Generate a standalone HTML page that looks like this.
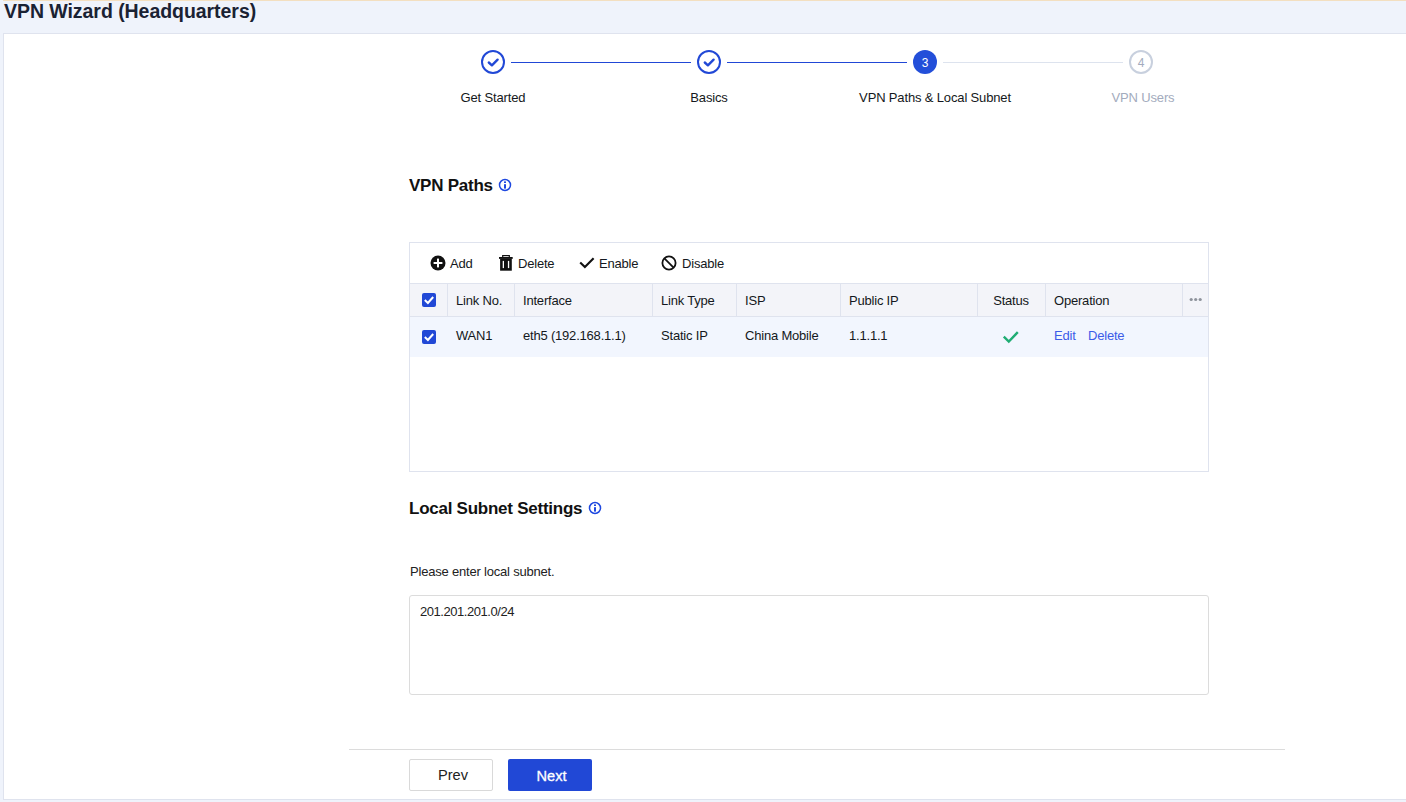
<!DOCTYPE html>
<html><head><meta charset="utf-8">
<style>
*{box-sizing:border-box;margin:0;padding:0}
html,body{width:1406px;height:802px;overflow:hidden}
body{background:#eff3fb;font-family:"Liberation Sans",sans-serif;color:#141820;position:relative}
.topline{position:absolute;left:3px;top:0;width:1403px;height:1px;background:#f3dfc0}
.title{position:absolute;left:4px;top:-1px;font-size:19.5px;letter-spacing:-0.05px;font-weight:bold;line-height:24px;color:#1a2233;white-space:nowrap}
.panel{position:absolute;left:3px;top:33px;width:1403px;height:767px;background:#fff;border:1px solid #dfe3ee;border-right:none}
.abs{position:absolute;white-space:nowrap}
.circle{position:absolute;width:24px;height:24px;border-radius:50%;top:50px}
.done{border:2px solid #2148d6}
.cur{background:#234fd9;color:#fff;font-size:12px;line-height:26px;text-align:center}
.todo{border:2px solid #c8d0de;color:#a3abbd;font-size:12px;line-height:22px;text-align:center}
.sline{position:absolute;top:62px;height:1px}
.slabel{position:absolute;top:90px;font-size:13px;line-height:16px;text-align:center;width:200px;white-space:nowrap;letter-spacing:-0.15px}
.h2{position:absolute;left:409px;font-size:17px;font-weight:bold;color:#111;white-space:nowrap;line-height:20px;letter-spacing:-0.25px}
.info{display:inline-block;width:12px;height:12px;vertical-align:middle}
.tbox{position:absolute;left:409px;top:242px;width:800px;height:230px;border:1px solid #dfe3ee;background:#fff}
.t13{font-size:13px;line-height:16px;letter-spacing:-0.2px}
.hrow{position:absolute;left:0;top:40px;width:798px;height:34px;background:#f3f4f9;border-top:1px solid #dfe3ee;border-bottom:1px solid #dfe3ee}
.drow{position:absolute;left:0;top:74px;width:798px;height:40px;background:#f2f6fe}
.vdiv{position:absolute;top:0;width:1px;height:32px;background:#dfe3ee}
.cb{position:absolute;width:14px;height:14px;background:#2148d6;border-radius:2px}
.btn{position:absolute;top:759px;height:32px;font-size:14.6px;line-height:31px;text-align:center;border-radius:2px}
</style></head><body>
<div class="topline"></div>
<div class="title">VPN Wizard (Headquarters)</div>
<div class="panel"></div>

<!-- stepper -->
<div class="circle done" style="left:481px"><svg width="20" height="20" style="position:absolute;left:0;top:0" viewBox="0 0 20 20"><path d="M5.8 10.5 L8.9 13.3 L14.6 7.7" fill="none" stroke="#2148d6" stroke-width="2.4" stroke-linecap="round" stroke-linejoin="round"/></svg></div>
<div class="sline" style="left:511px;width:180px;background:#2148d6"></div>
<div class="circle done" style="left:697px"><svg width="20" height="20" style="position:absolute;left:0;top:0" viewBox="0 0 20 20"><path d="M5.8 10.5 L8.9 13.3 L14.6 7.7" fill="none" stroke="#2148d6" stroke-width="2.4" stroke-linecap="round" stroke-linejoin="round"/></svg></div>
<div class="sline" style="left:727px;width:180px;background:#2148d6"></div>
<div class="circle cur" style="left:913px">3</div>
<div class="sline" style="left:943px;width:180px;background:#dde3ee"></div>
<div class="circle todo" style="left:1129px">4</div>
<div class="slabel" style="left:393px">Get Started</div>
<div class="slabel" style="left:609px">Basics</div>
<div class="slabel" style="left:835px">VPN Paths &amp; Local Subnet</div>
<div class="slabel" style="left:1043px;color:#a3abbd">VPN Users</div>

<!-- VPN Paths -->
<div class="h2" style="top:176px">VPN Paths</div>
<svg class="abs" style="left:498px;top:178px" width="14" height="14" viewBox="0 0 14 14"><circle cx="7" cy="7" r="5.5" fill="none" stroke="#1e48e0" stroke-width="1.5"/><rect x="6" y="6.2" width="2" height="4.4" fill="#1e48e0"/><rect x="6" y="3.4" width="2" height="1.6" fill="#1e48e0"/></svg>

<div class="tbox"></div>
<!-- toolbar -->
<svg class="abs" style="left:430px;top:255px" width="16" height="16" viewBox="0 0 16 16"><circle cx="8" cy="8" r="7.5" fill="#111"/><rect x="7" y="3.6" width="2" height="8.8" fill="#fff"/><rect x="3.6" y="7" width="8.8" height="2" fill="#fff"/></svg>
<div class="abs t13" style="left:450px;top:256px">Add</div>
<svg class="abs" style="left:499px;top:255px" width="14" height="16" viewBox="0 0 14 16"><rect x="3.7" y="0.6" width="6.6" height="2" fill="none" stroke="#111" stroke-width="1.2"/><rect x="0" y="2" width="13.7" height="1.9" fill="#111"/><rect x="1.1" y="3.7" width="11.7" height="12" fill="#111"/><rect x="3.7" y="5.9" width="1.3" height="7.2" fill="#fff"/><rect x="8.9" y="5.9" width="1.3" height="7.2" fill="#fff"/></svg>
<div class="abs t13" style="left:518px;top:256px">Delete</div>
<svg class="abs" style="left:579px;top:256px" width="16" height="14" viewBox="0 0 16 14"><path d="M1.2 6.4 L5.9 11.1 L14.6 2.2" fill="none" stroke="#111" stroke-width="2.1"/></svg>
<div class="abs t13" style="left:599px;top:256px">Enable</div>
<svg class="abs" style="left:661px;top:255px" width="16" height="16" viewBox="0 0 16 16"><circle cx="8" cy="8" r="6.6" fill="none" stroke="#111" stroke-width="1.8"/><path d="M3.4 3.4 L12.6 12.6" stroke="#111" stroke-width="1.8"/></svg>
<div class="abs t13" style="left:682px;top:256px">Disable</div>
<!-- header row -->
<div class="abs" style="left:410px;top:283px;width:798px;height:1px;background:#dfe3ee"></div>
<div class="abs" style="left:410px;top:284px;width:798px;height:32px;background:#f3f4f9"></div>
<div class="abs" style="left:410px;top:316px;width:798px;height:1px;background:#dfe3ee"></div>
<div class="abs" style="left:410px;top:317px;width:798px;height:40px;background:#f2f6fe"></div>
<div class="vdiv" style="left:447px;top:284px"></div>
<div class="vdiv" style="left:514px;top:284px"></div>
<div class="vdiv" style="left:652px;top:284px"></div>
<div class="vdiv" style="left:736px;top:284px"></div>
<div class="vdiv" style="left:840px;top:284px"></div>
<div class="vdiv" style="left:977px;top:284px"></div>
<div class="vdiv" style="left:1045px;top:284px"></div>
<div class="vdiv" style="left:1182px;top:284px"></div>
<svg class="abs cbx" style="left:422px;top:293px" width="14" height="14" viewBox="0 0 14 14"><rect width="14" height="14" rx="2" fill="#2148d6"/><path d="M2.8 7.1 L5.9 10 L11.2 4" fill="none" stroke="#fff" stroke-width="2"/></svg>
<div class="abs t13" style="left:456px;top:293px">Link No.</div>
<div class="abs t13" style="left:523px;top:293px">Interface</div>
<div class="abs t13" style="left:661px;top:293px">Link Type</div>
<div class="abs t13" style="left:745px;top:293px">ISP</div>
<div class="abs t13" style="left:849px;top:293px">Public IP</div>
<div class="abs t13" style="left:977px;top:293px;width:68px;text-align:center">Status</div>
<div class="abs t13" style="left:1054px;top:293px">Operation</div>
<svg class="abs" style="left:1189px;top:297px" width="14" height="5" viewBox="0 0 14 5"><circle cx="2.2" cy="2.5" r="1.6" fill="#8e939c"/><circle cx="6.7" cy="2.5" r="1.6" fill="#8e939c"/><circle cx="11.2" cy="2.5" r="1.6" fill="#8e939c"/></svg>
<!-- data row -->
<svg class="abs" style="left:422px;top:330px" width="14" height="14" viewBox="0 0 14 14"><rect width="14" height="14" rx="2" fill="#2148d6"/><path d="M2.8 7.1 L5.9 10 L11.2 4" fill="none" stroke="#fff" stroke-width="2"/></svg>
<div class="abs t13" style="left:456px;top:328px">WAN1</div>
<div class="abs t13" style="left:523px;top:328px">eth5 (192.168.1.1)</div>
<div class="abs t13" style="left:661px;top:328px">Static IP</div>
<div class="abs t13" style="left:745px;top:328px">China Mobile</div>
<div class="abs t13" style="left:849px;top:328px">1.1.1.1</div>
<svg class="abs" style="left:1002px;top:330px" width="18" height="14" viewBox="0 0 18 14"><path d="M1.8 6.6 L6.8 11.6 L15.8 2.2" fill="none" stroke="#20ad74" stroke-width="2.4"/></svg>
<div class="abs t13" style="left:1054px;top:328px;color:#3d5ce8">Edit</div>
<div class="abs t13" style="left:1088px;top:328px;color:#3d5ce8">Delete</div>

<!-- Local subnet -->
<div class="h2" style="top:499px">Local Subnet Settings</div>
<svg class="abs" style="left:588px;top:501px" width="14" height="14" viewBox="0 0 14 14"><circle cx="7" cy="7" r="5.5" fill="none" stroke="#1e48e0" stroke-width="1.5"/><rect x="6" y="6.2" width="2" height="4.4" fill="#1e48e0"/><rect x="6" y="3.4" width="2" height="1.6" fill="#1e48e0"/></svg>
<div class="abs t13" style="left:410px;top:564px;color:#222">Please enter local subnet.</div>
<div class="abs" style="left:409px;top:595px;width:800px;height:100px;border:1px solid #dcdcdc;border-radius:3px;background:#fff"></div>
<div class="abs t13" style="left:420px;top:604px;color:#222;letter-spacing:-0.45px">201.201.201.0/24</div>

<div class="abs" style="left:349px;top:749px;width:936px;height:1px;background:#dcdcdc"></div>
<div class="btn" style="left:409px;width:84px;border:1px solid #d9d9d9;background:#fff;color:#222;padding-left:4px">Prev</div>
<div class="btn" style="left:508px;width:84px;background:#2148d6;color:#fff;line-height:34px;-webkit-text-stroke:0.3px #fff;padding-left:3px">Next</div>
</body></html>
